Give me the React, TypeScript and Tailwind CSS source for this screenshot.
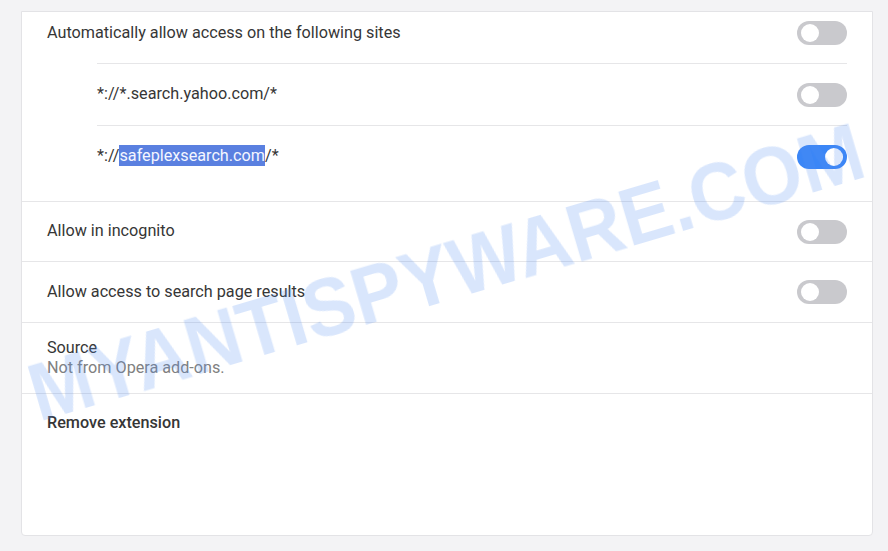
import { memo } from "react";

type ToggleProps = { on?: boolean };

function Toggle({ on = false }: ToggleProps) {
  return (
    <span
      className={
        on
          ? "relative inline-flex h-[24px] w-[50px] shrink-0 items-center rounded-full bg-[#3b86f6]"
          : "relative inline-flex h-[24px] w-[50px] shrink-0 items-center rounded-full bg-[#c9c9cd]"
      }
    >
      <span
        className={
          on
            ? "absolute right-[4px] h-[18px] w-[18px] rounded-full bg-white"
            : "absolute left-[4px] h-[18px] w-[18px] rounded-full bg-white"
        }
      />
    </span>
  );
}

const sites = [
  { id: "yahoo", on: false },
  { id: "safeplex", on: true },
];

function SettingsCard() {
  return (
    <div className="relative flex h-[525px] flex-col overflow-hidden rounded-b-[4px] border border-[#e3e3e6] bg-white text-[16.2px] text-[#363636]">
      <div className="flex flex-col px-[25px]">
        <div className="flex h-[42px] items-center justify-between">
          <span>Automatically allow access on the following sites</span>
          <Toggle />
        </div>
        <ul className="ml-[50px] mt-[9px] pb-[14px]">
          {sites.map((site) => (
            <li
              key={site.id}
              className="flex h-[62px] items-center justify-between border-t border-[#e6e6e8]"
            >
              {site.id === "yahoo" ? (
                <span>*://*.search.yahoo.com/*</span>
              ) : (
                <span>
                  *://
                  <span className="bg-[#5a80e0] py-[1px] text-[#f4f6ff]">
                    safeplexsearch.com
                  </span>
                  /*
                </span>
              )}
              <Toggle on={site.on} />
            </li>
          ))}
        </ul>
      </div>

      <div className="flex h-[60px] items-center justify-between border-t border-[#e6e6e8] px-[25px]">
        <span>Allow in incognito</span>
        <Toggle />
      </div>

      <div className="flex h-[61px] items-center justify-between border-t border-[#e6e6e8] px-[25px]">
        <span>Allow access to search page results</span>
        <Toggle />
      </div>

      <div className="flex h-[71px] flex-col justify-center border-t border-[#e6e6e8] px-[25px] leading-[20px]">
        <span>Source</span>
        <span className="text-[#808080]">Not from Opera add-ons.</span>
      </div>

      <div className="flex h-[60px] items-center border-t border-[#e6e6e8] px-[25px] font-medium">
        Remove extension
      </div>

      <div className="flex-1" />
    </div>
  );
}

function App() {
  return (
    <div
      className="relative h-[551px] w-[888px] overflow-hidden bg-[#f3f3f5] pl-[21px] pr-[15px] pt-[11px]"
      style={{ fontFamily: "Roboto, 'Liberation Sans', sans-serif" }}
    >
      <SettingsCard />
      <span
        className="pointer-events-none absolute left-[446px] top-[272px] whitespace-nowrap text-[82px] font-bold leading-none text-[rgba(80,140,240,0.22)] blur-[0.6px]"
        style={{
          fontFamily: "'Liberation Sans', Arial, sans-serif",
          transform: "translate(-50%, -50%) rotate(-16.5deg) scaleX(0.93)",
        }}
      >
        MYANTISPYWARE.COM
      </span>
    </div>
  );
}

export default memo(App);
